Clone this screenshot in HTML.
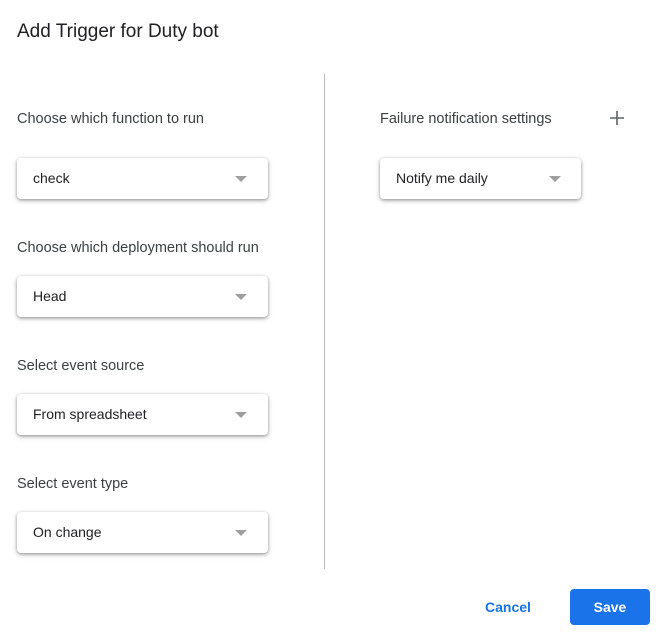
<!DOCTYPE html>
<html><head><style>
body{margin:0;width:663px;height:641px;background:#fff;font-family:"Liberation Sans",sans-serif;color:#202124;position:relative;overflow:hidden}
.a{position:absolute}
.t{left:17px;top:21px;font-size:19px;color:#202124}
.l{font-size:14.5px;color:#3c4043}
.b{position:absolute;height:41px;background:#fff;border-radius:4px;box-shadow:0 1px 3px rgba(0,0,0,.35),0 2px 6px rgba(0,0,0,.15);font-size:14px;color:#202124}
.b span{position:absolute;left:16px;top:12px}
.b i{position:absolute;top:18px;width:0;height:0;border-left:6px solid transparent;border-right:6px solid transparent;border-top:6px solid #9e9e9e}
</style></head><body>
<div class="a t">Add Trigger for Duty bot</div>
<div class="a" style="left:324px;top:74px;width:1px;height:495px;background:#bdbdbd"></div>

<div class="a l" style="left:17px;top:111px">Choose which function to run</div>
<div class="b" style="left:17px;top:158px;width:251px"><span>check</span><i style="left:218px"></i></div>

<div class="a l" style="left:17px;top:240px">Choose which deployment should run</div>
<div class="b" style="left:17px;top:276px;width:251px"><span>Head</span><i style="left:218px"></i></div>

<div class="a l" style="left:17px;top:358px">Select event source</div>
<div class="b" style="left:17px;top:394px;width:251px"><span>From spreadsheet</span><i style="left:218px"></i></div>

<div class="a l" style="left:17px;top:476px">Select event type</div>
<div class="b" style="left:17px;top:512px;width:251px"><span>On change</span><i style="left:218px"></i></div>

<div class="a l" style="left:380px;top:111px">Failure notification settings</div>
<svg class="a" style="left:609px;top:110px" width="16" height="16"><path d="M8 1v14M1 8h14" stroke="#5f6368" stroke-width="1.6"/></svg>
<div class="b" style="left:380px;top:158px;width:201px"><span>Notify me daily</span><i style="left:169px"></i></div>

<div class="a" style="left:485px;top:599px;font-size:14px;font-weight:bold;color:#1a73e8">Cancel</div>
<div class="a" style="left:570px;top:589px;width:80px;height:36px;background:#1a73e8;border-radius:4px;color:#fff;font-size:14px;font-weight:bold;text-align:center;line-height:36px">Save</div>
</body></html>
